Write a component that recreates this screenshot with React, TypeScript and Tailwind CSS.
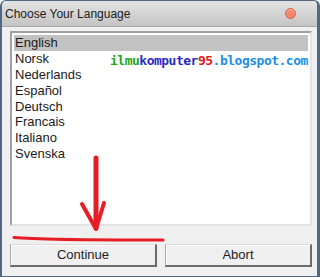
const languages = ['English', 'Norsk', 'Nederlands', 'Español', 'Deutsch', 'Francais', 'Italiano', 'Svenska'];

const App = () => {
  return (
    <div className="relative w-[320px] h-[277px] flex flex-col bg-[#f0f0f0] border-l-2 border-r-[3px] border-b border-t border-[#4f6884] rounded-t-[6px] overflow-hidden font-['Liberation_Sans',Arial,sans-serif]">
      {/* Title bar */}
      <div className="h-[26px] shrink-0 flex items-center justify-between pl-[3px] pr-[21px] bg-gradient-to-b from-[#e4e4e4] to-[#c4c4c4] border-b border-[#a9a9a9]">
        <span className="text-[12px] text-[#1c1c1c]">Choose Your Language</span>
        <span className="w-[11px] h-[11px] rounded-full bg-[#f4876c] border border-[#d35d47] shadow-[inset_0_1px_1px_#ffc2b0]" />
      </div>

      {/* Body */}
      <div className="flex-1 flex flex-col pl-[8px] pr-[5px] pt-[4px]">
        <div className="h-[195px] bg-white border-2 border-t-[#a0a0a0] border-l-[#a0a0a0] border-b-[#e3e3e3] border-r-[#e3e3e3] p-[2px]">
          <ul className="flex flex-col">
            {languages.map((lang, i) => (
              <li
                key={lang}
                className={`h-[15.8px] flex items-center pl-[1px] text-[13px] leading-none text-[#1a1a1a] ${i === 0 ? 'bg-[#c2c2c2]' : ''}`}
              >
                {lang}
              </li>
            ))}
          </ul>
        </div>

        <div className="mt-[18px] flex gap-[8px]">
          <button className="w-[147px] h-[23px] flex items-center justify-center text-[13px] text-[#1e1e1e] bg-[#f0f0f0] border border-t-[#dcdcdc] border-l-[#a8a8a8] border-b-2 border-r-2 border-b-[#6b6b6b] border-r-[#6b6b6b] shadow-[inset_1px_1px_0_#ffffff]">
            Continue
          </button>
          <button className="w-[147px] h-[23px] flex items-center justify-center text-[13px] text-[#1e1e1e] bg-[#f0f0f0] border border-t-[#dcdcdc] border-l-[#a8a8a8] border-b-2 border-r-2 border-b-[#6b6b6b] border-r-[#6b6b6b] shadow-[inset_1px_1px_0_#ffffff]">
            Abort
          </button>
        </div>
      </div>

      {/* Watermark */}
      <div className="absolute left-[108px] top-[53px] font-['DejaVu_Sans_Mono',monospace] font-bold text-[13px] tracking-[-0.5px] leading-none">
        <span className="text-[#1fa51f]">ilmu</span>
        <span className="text-[#2a2ac4]">komputer</span>
        <span className="text-[#e51b1b]">95</span>
        <span className="text-[#1b8fe4]">.blogspot.com</span>
      </div>

      {/* Red annotation */}
      <svg className="absolute left-[-2px] top-[-1px] pointer-events-none" width="320" height="277" viewBox="0 0 320 277">
        <g stroke="#e81c24" fill="none" strokeLinecap="round" strokeLinejoin="round">
          <path d="M96 158 L96 228" strokeWidth="5" />
          <path d="M82 204 L96 229 L104 203" strokeWidth="4" />
          <path d="M14 237.5 Q40 240 163 240" strokeWidth="3" />
        </g>
      </svg>
    </div>
  );
};

export default App;
